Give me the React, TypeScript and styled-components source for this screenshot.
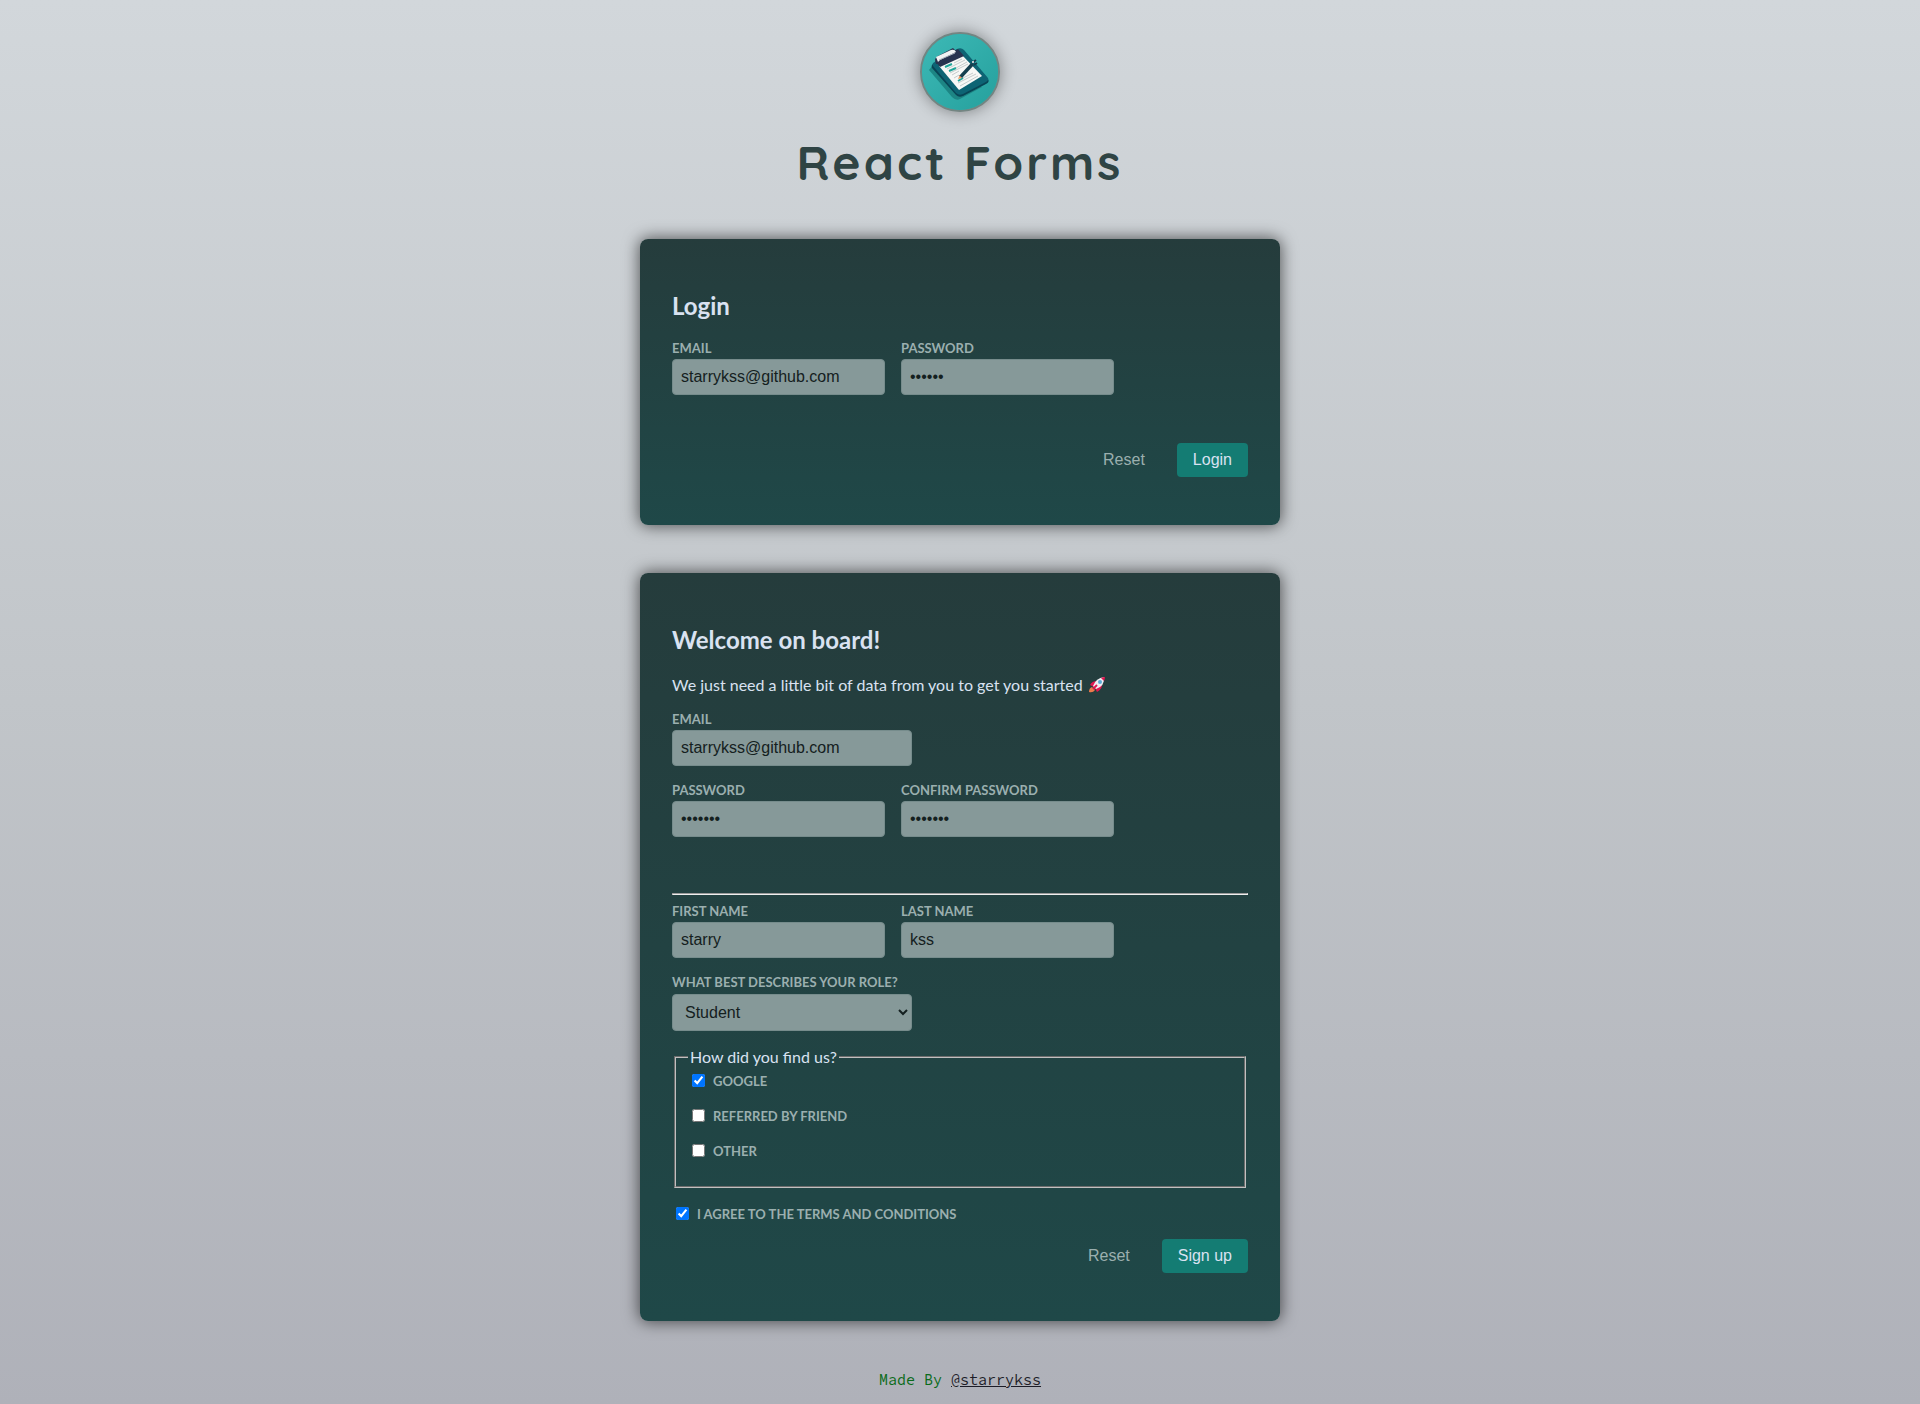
import React from "react";
import styled, { createGlobalStyle, css } from "styled-components";

const GlobalStyle = createGlobalStyle`
  * { box-sizing: border-box; }
  body {
    margin: 0;
    min-height: 100vh;
    background: linear-gradient(180deg, #d2d7db 0%, #c1c5c9 50%, #afb1b9 100%);
    color: #d9e2f1;
    font-family: Lato, "Liberation Sans", sans-serif;
    font-size: 16px;
  }
`;

const Header = styled.header`
  display: flex;
  flex-direction: column;
  align-items: center;
  gap: 20px;
  padding: 32px 16px 47px;
`;

const Logo = styled.svg`
  display: block;
  width: 80px;
  height: 80px;
  border: 2px solid #738582;
  border-radius: 50%;
  background: #31acaa;
  box-shadow: 0 0 16px rgba(0, 0, 0, 0.4);
`;

const Title = styled.h1`
  margin: 0;
  color: #2f4444;
  font-family: Quicksand, Lato, sans-serif;
  font-size: 48px;
  line-height: 60px;
  font-weight: 700;
  letter-spacing: 3px;
`;

const Main = styled.main`
  display: flex;
  flex-direction: column;
  align-items: center;
  gap: 48px;
  padding: 0 16px;
`;

const Card = styled.form`
  display: flex;
  flex-direction: column;
  gap: 16px;
  width: 100%;
  max-width: 640px;
  padding: 52px 32px 48px;
  border-radius: 8px;
  background: linear-gradient(180deg, #253c3c 0%, #1f4848 100%);
  box-shadow: 0 0 16px 1px rgba(0, 0, 0, 0.6);
`;

const Heading = styled.h2`
  margin: 0 0 4px;
  font-size: 24px;
  line-height: 29px;
`;

const Intro = styled.p`
  display: flex;
  align-items: center;
  gap: 6px;
  margin: 0;
  line-height: 21px;
`;

const Row = styled.div`
  display: flex;
  flex-wrap: wrap;
  gap: 16px;
`;

const Field = styled.div<{ $wide?: boolean }>`
  display: flex;
  flex-direction: column;
  gap: 3px;
  width: ${(p) => (p.$wide ? "240px" : "213px")};
`;

const Label = styled.label`
  color: #9bafaf;
  font-size: 13px;
  line-height: 16px;
  font-weight: 700;
  text-transform: uppercase;
  white-space: nowrap;
`;

const control = css`
  width: 100%;
  border: 1px solid #768c8c;
  border-radius: 4px;
  background: #869999;
  color: #142020;
  font-family: "Liberation Sans", Arial, sans-serif;
  font-size: 16px;
`;

const Input = styled.input`
  ${control}
  height: 36px;
  padding: 8px;
`;

const Select = styled.select`
  ${control}
  height: 37px;
  margin-top: 1px;
  padding: 8px;
`;

const Section = styled.section`
  display: flex;
  flex-direction: column;
  gap: 8px;
  margin-top: 40px;
`;

const Divider = styled.hr`
  width: 100%;
  margin: 0;
  border: 1px solid;
  border-color: #9a9a9a #eeeeee #eeeeee #9a9a9a;
`;

const Sources = styled.fieldset`
  margin: 0 2px;
  padding: 5px 12px 0;
  border: 2px groove #c0c0c0;
`;

const Legend = styled.legend`
  padding: 0 2px;
  line-height: 19px;
`;

const CheckList = styled.div`
  display: flex;
  flex-direction: column;
  gap: 16px;
  padding-bottom: 26px;
`;

const CheckRow = styled.div`
  display: flex;
  align-items: center;
  height: 19px;
  gap: 8px;
  padding-left: 4px;
`;

const Checkbox = styled.input`
  width: 13px;
  height: 13px;
  margin: 0;
`;

const Actions = styled.div<{ $spaced?: boolean }>`
  display: flex;
  justify-content: flex-end;
  gap: 16px;
  margin-top: ${(p) => (p.$spaced ? "32px" : "0")};
`;

const Button = styled.button<{ $flat?: boolean }>`
  height: 34px;
  padding: 0 16px;
  border: 0;
  border-radius: 4px;
  background: ${(p) => (p.$flat ? "transparent" : "#147c73")};
  color: ${(p) => (p.$flat ? "#9bafaf" : "#d9e2f1")};
  font-family: "Liberation Sans", Arial, sans-serif;
  font-size: 16px;
  cursor: pointer;
`;

const Footer = styled.footer`
  padding: 48px 16px 14px;
  color: #0b6b1a;
  font-family: Consolas, "Source Code Pro", "Liberation Mono", monospace;
  font-size: 15px;
  line-height: 21px;
  text-align: center;
`;

const Author = styled.a`
  color: #1d1d28;
`;

function ClipboardLogo() {
  return (
    <Logo viewBox="0 0 76 76" role="img" aria-label="Clipboard">
      <defs>
        <linearGradient id="disc" x1="0" y1="0" x2="1" y2="1">
          <stop offset="0" stopColor="#3db9b6" />
          <stop offset="1" stopColor="#25a09d" />
        </linearGradient>
      </defs>
      <rect width="76" height="76" fill="url(#disc)" />
      <path d="M7 36 L11 31 L60 53 L38 65 Q34 67 30 63 Z" fill="#1d8584" />
      <path d="M11 30 L35 16 Q39 14 42 17 L66 45 Q68 48 64 50 L41 62 Q37 64 34 61 L10 34 Q9 31 11 30Z" fill="#084555" />
      <path d="M11 29 L35 15 Q39 13 42 16 L66 44 Q67 46 64 48 L41 60 Q37 62 34 59 L11 32 Q10 30 11 29Z" fill="#0d6474" />
      <path d="M17 32 L40 21 L60 42 L37 56Z" fill="#f7f8f6" />
      <path d="M13 27 L36 15 L42 22 L18 33Z" fill="#28334f" />
      <path d="M13 25 L16 22 L31 14 L35 18 L35 20 L18 30 L14 30Z" fill="#28334f" />
      <path d="M14 23 L29 16 Q33 15 34 18 L18 26 L16 28Z" fill="#f1f2f2" />
      <path d="M17 26 L33 19" stroke="#aab2bb" strokeWidth="1" />
      <g strokeWidth="1" stroke="#c5cbcb">
        <path d="M32 29 L40 25 M25 35 L43 26 M34 34 L45 28 M28 39 L46 30 M30 41 L37 37 M32 44 L37 41 M41 44 L51 39 M36 49 L54 40 M38 52 L56 42" />
      </g>
      <path d="M23 33 L30 30 M27 37 L34 34 M36 47 L41 44" stroke="#20a69a" strokeWidth="2" />
      <path d="M37 42 L49 29 L52 31 L40 44Z" fill="#15404f" />
      <path d="M36 45 L37.500 41.500 L40 44Z" fill="#ef9a61" />
      <path d="M50 29 L54 26 M52 31 L55 29" stroke="#183b4d" strokeWidth="2" />
      <circle cx="51" cy="28" r="1" fill="#f4f4f4" />
    </Logo>
  );
}

function Rocket() {
  return (
    <svg width="17" height="17" viewBox="0 0 17 17" role="img" aria-label="rocket">
      <path d="M0 16 Q0 12 3 11 L6 14 Q4 17 0 16Z" fill="#ee7a4c" />
      <path d="M8 5 Q3 5 1 9 L5 11 Z M13 9 Q13 13 8 16 L6 12Z" fill="#e01650" />
      <path d="M4 10 Q7 2 15 1 Q16 10 7 13Z" fill="#f0edf2" />
      <path d="M12 2 Q14 1 16 1 Q16 3 15 5Z" fill="#e01650" />
      <circle cx="11" cy="6" r="2" fill="#5aa9d6" />
      <path d="M4 13 L8 9" stroke="#e01650" strokeWidth="2" />
    </svg>
  );
}

type TextFieldProps = {
  id: string;
  label: string;
  value: string;
  type?: string;
  wide?: boolean;
};

function TextField({ id, label, value, type = "text", wide }: TextFieldProps) {
  return (
    <Field $wide={wide}>
      <Label htmlFor={id}>{label}</Label>
      <Input id={id} name={id} type={type} defaultValue={value} autoComplete="off" />
    </Field>
  );
}

function CheckField({ id, label, checked }: { id: string; label: string; checked?: boolean }) {
  return (
    <CheckRow>
      <Checkbox id={id} name={id} type="checkbox" defaultChecked={checked} />
      <Label htmlFor={id}>{label}</Label>
    </CheckRow>
  );
}

const stay = (event: React.FormEvent) => event.preventDefault();

function LoginForm() {
  return (
    <Card onSubmit={stay}>
      <Heading>Login</Heading>
      <Row>
        <TextField id="login-email" label="Email" type="email" value="starrykss@github.com" />
        <TextField id="login-password" label="Password" type="password" value="secret" />
      </Row>
      <Actions $spaced>
        <Button type="reset" $flat>Reset</Button>
        <Button type="submit">Login</Button>
      </Actions>
    </Card>
  );
}

function SignupForm() {
  return (
    <Card onSubmit={stay}>
      <Heading>Welcome on board!</Heading>
      <Intro>
        We just need a little bit of data from you to get you started
        <Rocket />
      </Intro>
      <TextField id="email" label="Email" type="email" value="starrykss@github.com" wide />
      <Row>
        <TextField id="password" label="Password" type="password" value="secret7" />
        <TextField id="confirm" label="Confirm Password" type="password" value="secret7" />
      </Row>
      <Section>
        <Divider />
        <Row>
          <TextField id="first-name" label="First Name" value="starry" />
          <TextField id="last-name" label="Last Name" value="kss" />
        </Row>
      </Section>
      <Field $wide>
        <Label htmlFor="role">What best describes your role?</Label>
        <Select id="role" name="role" defaultValue="student">
          <option value="student">Student</option>
          <option value="teacher">Teacher</option>
          <option value="employee">Employee</option>
          <option value="founder">Founder</option>
          <option value="other">Other</option>
        </Select>
      </Field>
      <Sources>
        <Legend>How did you find us?</Legend>
        <CheckList>
          <CheckField id="google" label="Google" checked />
          <CheckField id="friend" label="Referred by friend" />
          <CheckField id="other" label="Other" />
        </CheckList>
      </Sources>
      <CheckField id="terms" label="I agree to the terms and conditions" checked />
      <Actions>
        <Button type="reset" $flat>Reset</Button>
        <Button type="submit">Sign up</Button>
      </Actions>
    </Card>
  );
}

export default function App() {
  return (
    <>
      <GlobalStyle />
      <Header>
        <ClipboardLogo />
        <Title>React Forms</Title>
      </Header>
      <Main>
        <LoginForm />
        <SignupForm />
      </Main>
      <Footer>
        Made By <Author href="https://github.com/starrykss">@starrykss</Author>
      </Footer>
    </>
  );
}
